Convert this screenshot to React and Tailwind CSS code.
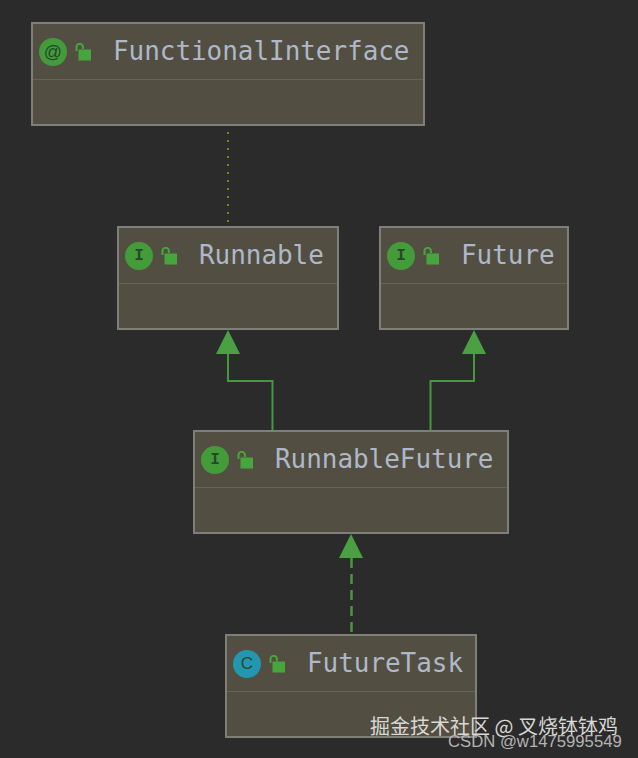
// Class diagram: nodes sit on a free canvas, edges are drawn in one svg underneath
const BADGE = {
  at: { cls: "bg-[#439c39] text-[18px] font-['Liberation_Sans',sans-serif]", letter: "@" },
  i: { cls: "bg-[#439c39] text-[16px] font-['Liberation_Mono',monospace] font-bold", letter: "I" },
  c: { cls: "bg-[#2596b0] text-[17px] font-['Liberation_Sans',sans-serif]", letter: "C" },
};

function Lock() {
  return (
    <svg width="18" height="18" viewBox="0 0 18 18" className="shrink-0">
      <path d="M2.5 8 V4 a3.200 3.200 0 0 1 6.400 0 V6" fill="none" stroke="#46a53c" strokeWidth="2" />
      <rect x="4.500" y="6.500" width="12.500" height="11" fill="#46a53c" />
    </svg>
  );
}

function Node({ pos, kind, name }) {
  const b = BADGE[kind];
  return (
    <div className={`absolute h-[104px] flex flex-col bg-[#524e42] border-2 border-[#7f7f7a] ${pos}`}>
      <div className="h-[56px] flex items-center pl-[6px] border-b border-[#66635a]">
        <div className={`w-[28px] h-[28px] rounded-full flex items-center justify-center leading-none text-[#24492a] ${b.cls}`}>
          {b.letter}
        </div>
        <div className="ml-[7px]"><Lock /></div>
        <span className="ml-[21px] -mt-[2px] text-[26px] leading-none tracking-[-0.05px] text-[#aeb8c8] font-['DejaVu_Sans_Mono',monospace]">
          {name}
        </span>
      </div>
    </div>
  );
}

function Edges() {
  const green = "#45993d";
  return (
    <svg width="638" height="758" className="absolute left-0 top-0">
      <path d="M228 132 V224" fill="none" stroke="#6f8a1e" strokeWidth="2" strokeDasharray="2 6" />
      <path d="M228 354 V381 H272.500 V430" fill="none" stroke={green} strokeWidth="2" />
      <path d="M474 354 V381 H430.500 V430" fill="none" stroke={green} strokeWidth="2" />
      <path d="M351.500 558 V634" fill="none" stroke={green} strokeWidth="2.500" strokeDasharray="10 6" />
      <polygon points="228,330 216,354 240,354" fill="#4ba043" />
      <polygon points="474,330 462,354 486,354" fill="#4ba043" />
      <polygon points="351,534 339,558 363,558" fill="#4ba043" />
    </svg>
  );
}

export default function App() {
  return (
    <div className="relative w-[638px] h-[758px] overflow-hidden bg-[#2b2b2b]">
      <Edges />
      <Node pos="left-[31px] top-[22px] w-[394px]" kind="at" name="FunctionalInterface" />
      <Node pos="left-[117px] top-[226px] w-[222px]" kind="i" name="Runnable" />
      <Node pos="left-[379px] top-[226px] w-[190px]" kind="i" name="Future" />
      <Node pos="left-[193px] top-[430px] w-[316px]" kind="i" name="RunnableFuture" />
      <Node pos="left-[225px] top-[634px] w-[252px]" kind="c" name="FutureTask" />

      {/* watermarks */}
      <div className="absolute left-[370px] top-[714px] text-[20px] leading-[24px] whitespace-nowrap text-[#d8d8d4] font-['Noto_Sans_CJK_SC',sans-serif]">
        掘金技术社区 @ 叉烧钵钵鸡
      </div>
      <div className="absolute left-[448px] top-[732px] text-[16.700px] leading-[19px] whitespace-nowrap text-[#b4b4b4] font-['Liberation_Sans',sans-serif]">
        CSDN @w1475995549
      </div>
    </div>
  );
}
